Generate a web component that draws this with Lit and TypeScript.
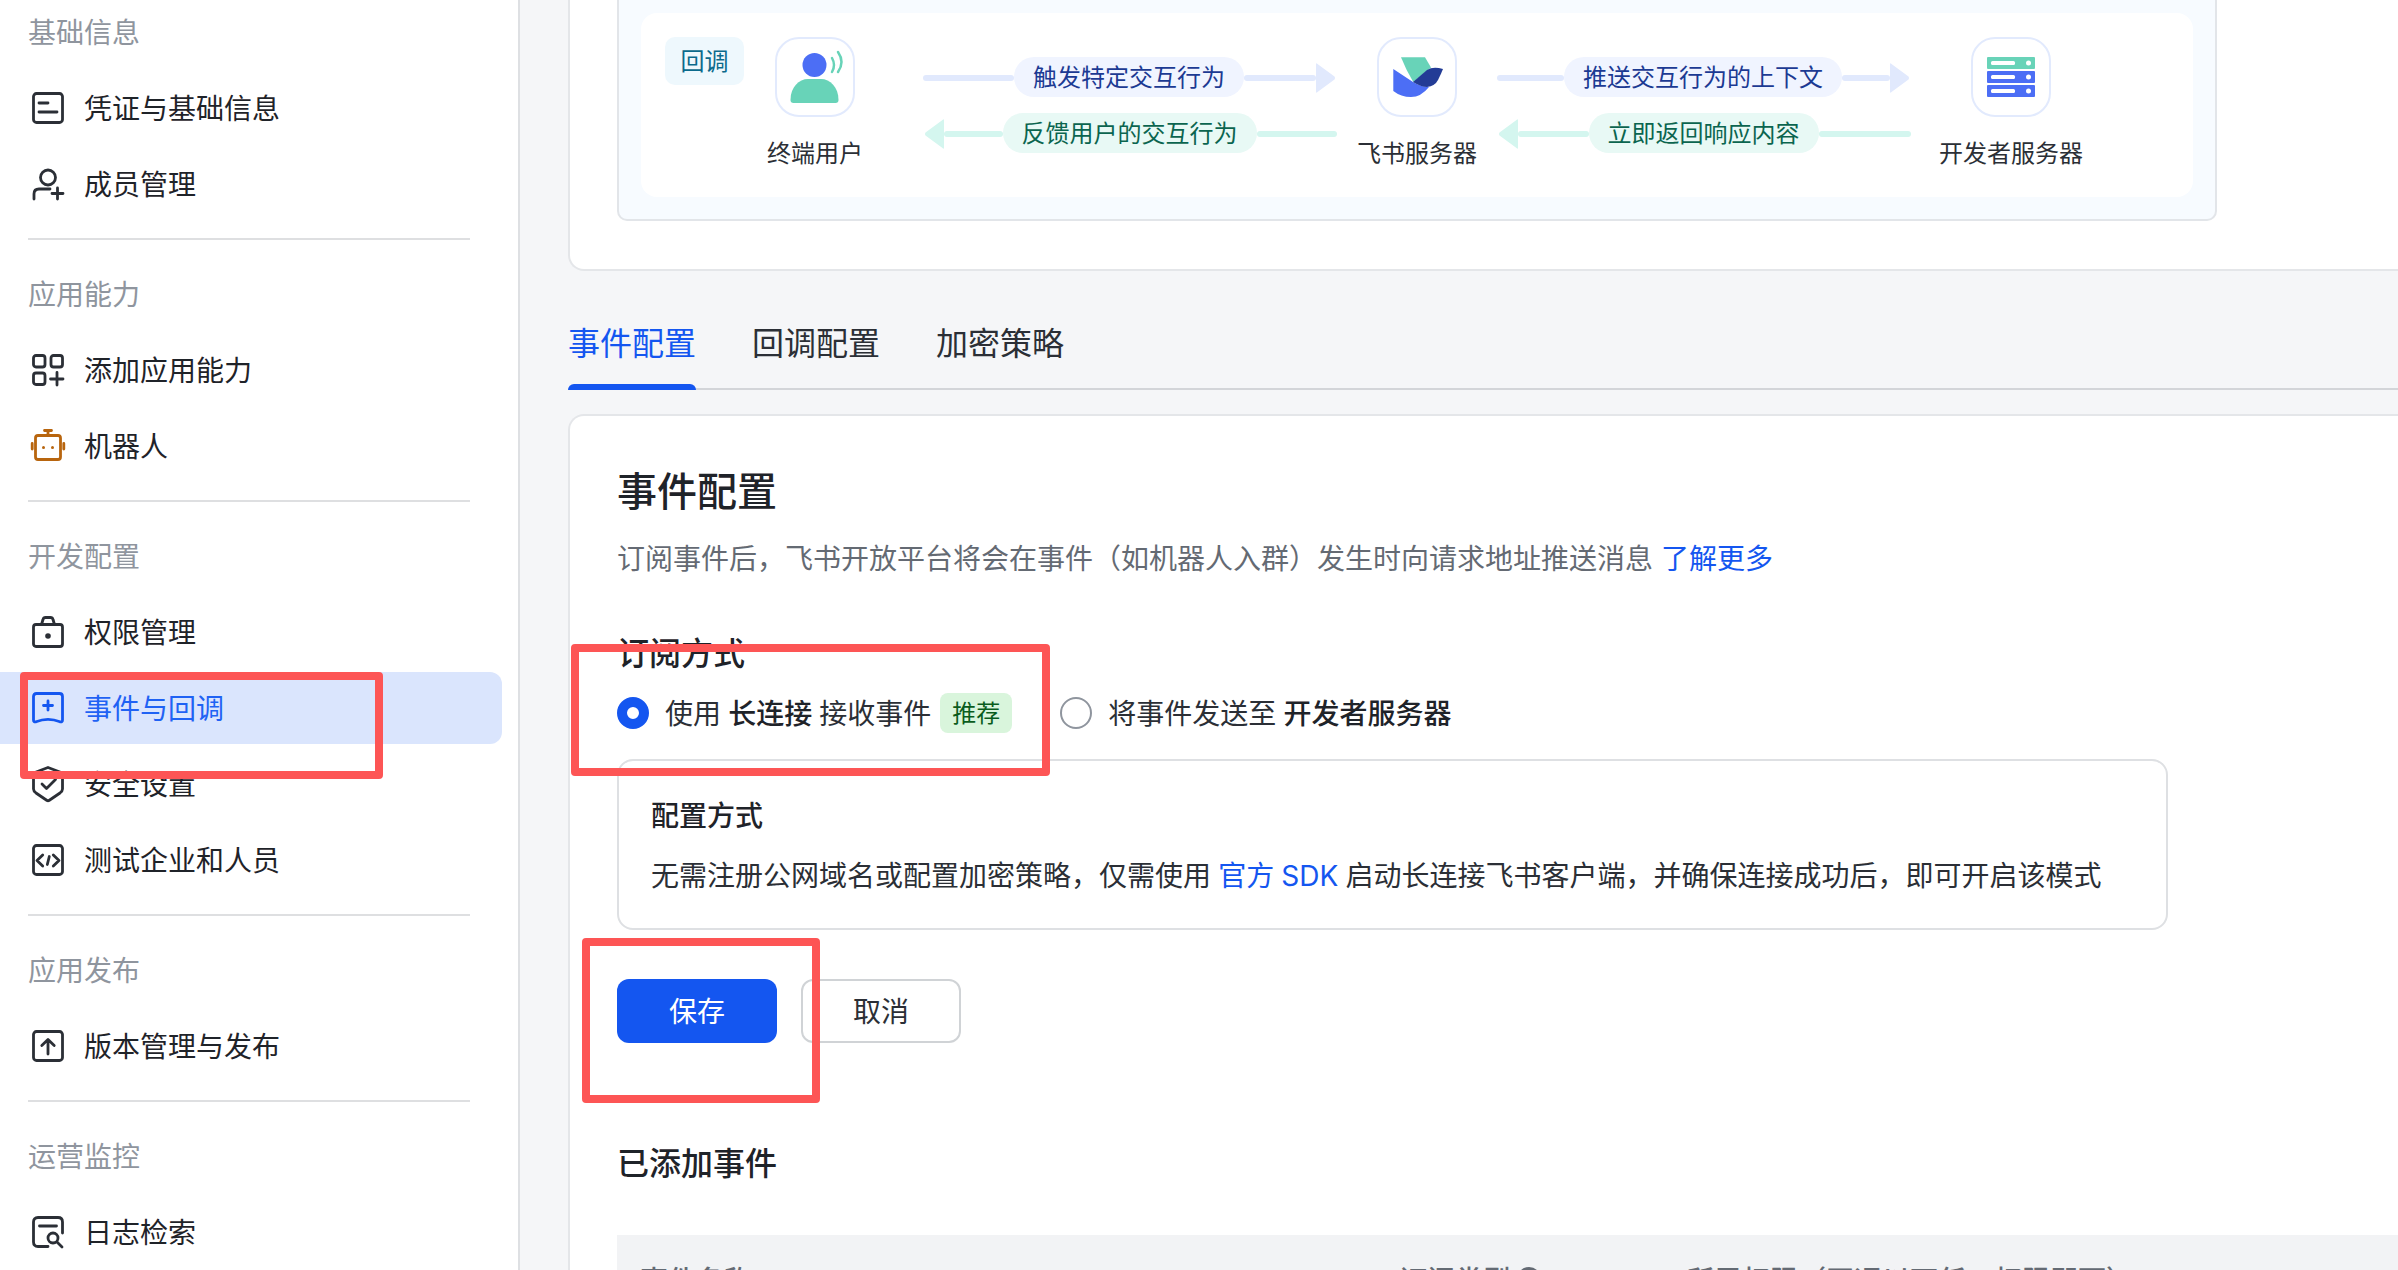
import { LitElement, html, css, svg } from "lit";
import { customElement } from "lit/decorators.js";

const icons: Record<string, unknown> = {
  cred: svg`<rect x="1.500" y="1.500" width="29" height="29" rx="3"/><path d="M7 11H16M7 20H25"/>`,
  member: svg`<circle cx="16" cy="9.500" r="7.500"/><path d="M2 31V26Q2 21 7 21H18M25.500 20V31M20 25.500H31"/>`,
  add: svg`<rect x="1.500" y="1.500" width="11.500" height="11.500" rx="2.500"/><rect x="19" y="1.500" width="11.500" height="11.500" rx="2.500"/><rect x="1.500" y="19" width="11.500" height="11.500" rx="2.500"/><path d="M25 18.500V31M18.500 25H31"/>`,
  robot: svg`<rect x="3.500" y="5.500" width="25" height="24" rx="2.500"/><path d="M16 5V1M12.500 .5H19.500M.2 13.500V19M31.800 13.500V19"/><circle cx="11.500" cy="17.500" r="1.500" fill="currentColor" stroke="none"/><circle cx="20.500" cy="17.500" r="1.500" fill="currentColor" stroke="none"/>`,
  lock: svg`<rect x="1.500" y="8.500" width="29" height="22" rx="2.500"/><path d="M9.500 8.500L11 3.500Q11.500 1.500 13.500 1.500H18.500Q20.500 1.500 21 3.500L22.500 8.500"/><circle cx="16" cy="20" r="2.800" fill="currentColor" stroke="none"/>`,
  event: svg`<path d="M4.500 1.500H27.500Q30.500 1.500 30.500 4.500V28Q30.500 30.500 28 29.800Q16 25 4 29.800Q1.500 30.500 1.500 28V4.500Q1.500 1.500 4.500 1.500Z"/><path d="M16 9V18M11.500 13.500H20.500"/>`,
  shield: svg`<path d="M16 -.5L30.500 5V21Q30.500 23 28 25L17 32.500Q16 33 15 32.500L4 25Q1.500 23 1.500 21V5Z"/><path d="M10 16L14.500 20.500L23.500 11.500"/>`,
  code: svg`<rect x="1.500" y="1.500" width="29" height="29" rx="3"/><path d="M10.700 11L5 16.500L10.700 22M21.300 11L27 16.500L21.300 22M17.300 12.500L15.300 20.500"/>`,
  upload: svg`<rect x="1.500" y="1.500" width="29" height="29" rx="3"/><path d="M16 24V10M9.800 15.500L16 9.500L22.200 15.500"/>`,
  log: svg`<path d="M16 30.500H6Q1.500 30.500 1.500 26V6Q1.500 1.500 6 1.500H26Q30.500 1.500 30.500 6V17"/><path d="M7.500 10H24.500"/><circle cx="21" cy="22" r="5"/><path d="M25 26L30 31"/>`,
};

const groups = [
  { label: "基础信息", items: [["cred", "凭证与基础信息"], ["member", "成员管理"]] },
  { label: "应用能力", items: [["add", "添加应用能力"], ["robot", "机器人"]] },
  { label: "开发配置", items: [["lock", "权限管理"], ["event", "事件与回调"], ["shield", "安全设置"], ["code", "测试企业和人员"]] },
  { label: "应用发布", items: [["upload", "版本管理与发布"]] },
  { label: "运营监控", items: [["log", "日志检索"]] },
];

@customElement("app-root")
export class AppRoot extends LitElement {
  static styles = css`
    :host {
      display: block;
      position: relative;
      width: 2398px;
      height: 1270px;
      overflow: hidden;
      background: #f5f6f8;
      font-family: Inter, "Noto Sans CJK SC", "Noto Sans", sans-serif;
      color: #1f2329;
      font-size: 28px;
    }
    .app { display: flex; height: 1270px; }
    .side {
      flex: none;
      width: 518px;
      background: #fff;
      border-right: 2px solid #dee0e3;
      padding-top: 12px;
      box-sizing: content-box;
    }
    .glabel {
      height: 40px;
      line-height: 43px;
      padding-left: 28px;
      margin-bottom: 20px;
      color: #8f959e;
    }
    .glabel.later { margin-top: 34px; }
    .item {
      width: 502px;
      height: 72px;
      box-sizing: border-box;
      padding-left: 32px;
      display: flex;
      align-items: center;
      gap: 20px;
      margin-bottom: 4px;
      border-radius: 0 12px 12px 0;
      color: #1f2329;
    }
    .item span { padding-bottom: 3px; }
    .item.last { margin-bottom: 0; }
    .item.active { background: #dae5fd; color: #1f62f4; }
    .ic {
      flex: none;
      width: 32px;
      height: 32px;
      overflow: visible;
      fill: none;
      stroke: currentColor;
      stroke-width: 2.800;
      stroke-linecap: round;
      stroke-linejoin: round;
      color: #2b2f36;
    }
    .item.active .ic { color: #1456f0; }
    .ic.orange { color: #b8650e; }
    .divider {
      height: 2px;
      width: 442px;
      margin: 18px 0 0 28px;
      background: #dedfe1;
    }
    .main { flex: 1; min-width: 0; padding-left: 48px; }
    .top {
      height: 271px;
      box-sizing: border-box;
      background: #fff;
      border: 2px solid #e4e6e9;
      border-width: 0 0 2px 2px;
      border-bottom-left-radius: 16px;
      padding-left: 47px;
    }
    .dia {
      width: 1600px;
      height: 221px;
      box-sizing: border-box;
      background: #f7fbff;
      border: 2px solid #e2e5e9;
      border-top: 0;
      border-radius: 0 0 10px 10px;
      padding: 13px 22px 0;
    }
    .flow {
      height: 184px;
      box-sizing: border-box;
      background: #fff;
      border-radius: 16px;
      padding: 24px 0 0 24px;
      display: flex;
      align-items: flex-start;
    }
    .chip {
      flex: none;
      width: 79px;
      height: 48px;
      box-sizing: border-box;
      padding-bottom: 3px;
      border-radius: 10px;
      background: #eef8fd;
      color: #0b6a8c;
      font-size: 24px;
      display: flex;
      align-items: center;
      justify-content: center;
    }
    .node { flex: none; display: flex; flex-direction: column; align-items: center; }
    .n1 { width: 142px; }
    .n2 { width: 160px; }
    .n3 { width: 200px; }
    .box {
      width: 80px;
      height: 80px;
      box-sizing: border-box;
      border: 2px solid #e2eafd;
      border-radius: 24px;
      overflow: hidden;
      background: #fff;
    }
    .box svg { display: block; margin: -2px; width: 80px; height: 80px; }
    .nlabel { font-size: 24px; line-height: 36px; margin-top: 18.500px; color: #2b2f36; white-space: nowrap; }
    .conn { flex: none; width: 414px; display: flex; flex-direction: column; gap: 16px; margin-top: 20px; }
    .conn.first { margin-left: 37px; }
    .row { height: 40px; display: flex; align-items: center; }
    .row.to { margin-right: 2px; color: #e1e9fd; }
    .row.back { margin: 0 3px 0 2px; color: #d4f6ef; }
    .seg { flex: 1; min-width: 0; display: flex; align-items: center; }
    .line { flex: 1; height: 6px; margin-top: 2px; background: currentColor; border-radius: 3px; }
    .back .seg:last-child .line { margin-right: -3px; }
    .seg svg { flex: none; display: block; margin-top: 2px; fill: currentColor; }
    .pill {
      flex: none;
      height: 40px;
      padding: 0 19px;
      border-radius: 20px;
      font-size: 24px;
      line-height: 41px;
    }
    .to .pill { background: #f0f4ff; color: #1c3a93; }
    .back .pill { background: #e8f9f5; color: #0b654f; }
    .tabs {
      display: flex;
      gap: 56px;
      height: 119px;
      box-sizing: border-box;
      padding-top: 51px;
      border-bottom: 2px solid #d3d5d9;
    }
    .tab {
      position: relative;
      height: 66px;
      font-size: 32px;
      line-height: 44px;
      color: #2b2f36;
    }
    .tab.on { color: #1456f0; }
    .tab.on::after {
      content: "";
      position: absolute;
      left: 0;
      right: 0;
      bottom: -2px;
      height: 6px;
      background: #1456f0;
      border-radius: 6px 6px 0 0;
    }
    .card {
      margin-top: 24px;
      height: 900px;
      box-sizing: border-box;
      background: #fff;
      border: 2px solid #e4e6e9;
      border-width: 2px 0 0 2px;
      border-top-left-radius: 16px;
      padding: 48px 0 0 47px;
    }
    h2 { margin: 0; font-size: 40px; line-height: 56px; font-weight: 500; color: #1f2329; }
    .desc { margin-top: 17px; line-height: 44px; color: #646a73; }
    a { color: #1456f0; text-decoration: none; }
    .sub { margin-top: 51px; font-size: 32px; line-height: 44px; font-weight: 500; }
    .radios { margin-top: 17px; display: flex; align-items: center; height: 40px; }
    .radio { flex: none; width: 32px; height: 32px; box-sizing: border-box; border-radius: 50%; margin-right: 16px; }
    .radio.on { border: 10px solid #1456f0; background: #fff; }
    .radio.off { border: 2px solid #8f959e; margin-left: 48px; }
    .rtext { color: #2b2f36; white-space: pre; padding-bottom: 3px; word-spacing: -0.750px; }
    .rtext b { font-weight: 500; color: #1f2329; }
    .tag {
      height: 40px;
      padding: 0 12px;
      margin-left: 9px;
      border-radius: 8px;
      background: #d9f5dc;
      color: #0a5c1c;
      font-size: 24px;
      line-height: 41px;
    }
    .cfg {
      margin-top: 26px;
      width: 1551px;
      height: 171px;
      box-sizing: border-box;
      border: 2px solid #dee0e3;
      border-radius: 16px;
      padding: 35px 0 0 32px;
    }
    .cfg h4 { margin: 0; font-size: 28px; line-height: 40px; font-weight: 500; }
    .cfg p { margin: 18px 0 0; line-height: 44px; color: #2b2f36; word-spacing: -0.750px; }
    .btns { margin-top: 49px; display: flex; gap: 24px; }
    .btn {
      width: 160px;
      height: 64px;
      box-sizing: border-box;
      padding-bottom: 2px;
      border-radius: 12px;
      display: flex;
      align-items: center;
      justify-content: center;
    }
    .btn.pri { background: #1456f0; color: #fff; }
    .btn.sec { border: 2px solid #d0d3d6; color: #2b2f36; }
    .added { margin-top: 99px; font-size: 32px; line-height: 44px; font-weight: 500; }
    .thead {
      margin-top: 49px;
      height: 88px;
      background: #f2f3f5;
      display: grid;
      grid-template-columns: 759px 287px 1fr;
      align-items: center;
      padding-left: 23px;
      color: #646a73;
      font-weight: 500;
      white-space: nowrap;
    }
    .q { display: inline-block; width: 24px; height: 24px; margin-left: 6px; border-radius: 50%; background: #646a73; vertical-align: 0; }
    .mark {
      position: absolute;
      box-sizing: border-box;
      border: 8px solid #fd5555;
      border-radius: 4px;
      pointer-events: none;
    }
    .m1 { left: 20px; top: 672px; width: 363px; height: 107px; }
    .m2 { left: 571px; top: 644px; width: 479px; height: 132px; }
    .m3 { left: 582px; top: 938px; width: 238px; height: 165px; }
  `;

  private head(d: "r" | "l") {
    return html`<svg width="19" height="30" viewBox="0 0 19 30"><path d=${d === "r" ? "M0 1.500Q0 -.5 1.500 .9L18.500 13.500Q19.500 15 18.500 16.500L1.500 29.100Q0 30.500 0 28.500Z" : "M19 1.500Q19 -.5 17.500 .9L.5 13.500Q-.5 15 .5 16.500L17.500 29.100Q19 30.500 19 28.500Z"}></path></svg>`;
  }

  private connector(top: string, bottom: string, first = false) {
    return html`<div class="conn ${first ? "first" : ""}">
      <div class="row to">
        <div class="seg"><div class="line"></div></div>
        <div class="pill">${top}</div>
        <div class="seg"><div class="line"></div>${this.head("r")}</div>
      </div>
      <div class="row back">
        <div class="seg">${this.head("l")}<div class="line"></div></div>
        <div class="pill">${bottom}</div>
        <div class="seg"><div class="line"></div></div>
      </div>
    </div>`;
  }

  private sidebar() {
    return html`<aside class="side">
      ${groups.map(
        (g, i) => html`
          <div class="glabel ${i ? "later" : ""}">${g.label}</div>
          ${g.items.map(
            ([ic, t], j) => html`<div class="item ${t === "事件与回调" ? "active" : ""} ${j === g.items.length - 1 ? "last" : ""}">
              <svg class="ic ${ic === "robot" ? "orange" : ""}" viewBox="0 0 32 32">${icons[ic]}</svg>
              <span>${t}</span>
            </div>`
          )}
          ${i < groups.length - 1 ? html`<div class="divider"></div>` : ""}
        `
      )}
    </aside>`;
  }

  render() {
    return html`<div class="app">
        ${this.sidebar()}
        <main class="main">
          <section class="top">
            <div class="dia">
              <div class="flow">
                <div class="chip">回调</div>
                <div class="node n1">
                  <div class="box">
                    <svg viewBox="0 0 80 80">
                      <circle cx="39.500" cy="28" r="12" fill="#4c6ef5"/>
                      <path d="M15.500 63C15.500 50 24 42 33 42H46C55 42 63.500 50 63.500 63Q63.500 66 60.500 66H18.500Q15.500 66 15.500 63Z" fill="#68d3b8"/>
                      <path d="M57 21Q61 28 57 35M63 15Q70 25 63 35" fill="none" stroke="#68d3b8" stroke-width="2.500" stroke-linecap="round"/>
                    </svg>
                  </div>
                  <div class="nlabel">终端用户</div>
                </div>
                ${this.connector("触发特定交互行为", "反馈用户的交互行为", true)}
                <div class="node n2">
                  <div class="box">
                    <svg viewBox="0 0 80 80">
                      <path d="M24 20.300H48L54 30.500L36.300 45Q29 33 24 20.300Z" fill="#68d3b8"/>
                      <path d="M16.300 32V54Q24 60 34 60Q44 60 52 50Q44 50 36 45Z" fill="#4c6ef5"/>
                      <path d="M66 32Q56 29 50 33L36 45Q44 50 50 50Q58 49 61 43Q64 37 66 32Z" fill="#233c96"/>
                    </svg>
                  </div>
                  <div class="nlabel">飞书服务器</div>
                </div>
                ${this.connector("推送交互行为的上下文", "立即返回响应内容")}
                <div class="node n3">
                  <div class="box">
                    <svg viewBox="0 0 80 80">
                      ${[["#68d3b8", 20], ["#4c6ef5", 34], ["#4c6ef5", 48]].map(
                        ([c, y]) => svg`<rect x="16" y=${y as number} width="48" height="12" rx="1" fill=${c as string}/>
                          <rect x="20" y=${(y as number) + 4} width="24" height="4" rx="1.500" fill="#fff"/>
                          <circle cx="57.500" cy=${(y as number) + 6} r="2.500" fill="#fff"/>`
                      )}
                    </svg>
                  </div>
                  <div class="nlabel">开发者服务器</div>
                </div>
              </div>
            </div>
          </section>

          <nav class="tabs">
            <div class="tab on">事件配置</div>
            <div class="tab">回调配置</div>
            <div class="tab">加密策略</div>
          </nav>

          <section class="card">
            <h2>事件配置</h2>
            <div class="desc">订阅事件后，飞书开放平台将会在事件（如机器人入群）发生时向请求地址推送消息 <a>了解更多</a></div>
            <div class="sub">订阅方式</div>
            <div class="radios">
              <span class="radio on"></span>
              <span class="rtext">使用 <b>长连接</b> 接收事件</span>
              <span class="tag">推荐</span>
              <span class="radio off"></span>
              <span class="rtext">将事件发送至 <b>开发者服务器</b></span>
            </div>
            <div class="cfg">
              <h4>配置方式</h4>
              <p>无需注册公网域名或配置加密策略，仅需使用 <a>官方 SDK</a> 启动长连接飞书客户端，并确保连接成功后，即可开启该模式</p>
            </div>
            <div class="btns">
              <div class="btn pri">保存</div>
              <div class="btn sec">取消</div>
            </div>
            <div class="added">已添加事件</div>
            <div class="thead">
              <span>事件名称</span>
              <span>订阅类型<i class="q"></i></span>
              <span>所需权限（开通以下任一权限即可）</span>
            </div>
          </section>
        </main>
      </div>
      <div class="mark m1"></div>
      <div class="mark m2"></div>
      <div class="mark m3"></div>`;
  }
}
